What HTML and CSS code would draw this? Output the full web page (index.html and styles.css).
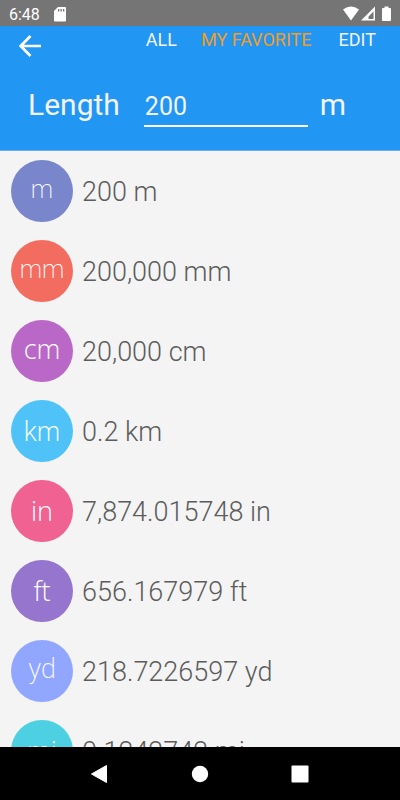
FILE: index.html
```html
<!DOCTYPE html>
<html lang="en">
<head>
  <meta charset="UTF-8">
  <meta name="viewport" content="width=device-width, initial-scale=1">
  <title>Length</title>
  <link rel="stylesheet" href="styles.css">
</head>
<body>

  <div class="status-bar">
    <span>6:48</span>
    <svg class="sd-card" width="12" height="15" viewBox="0 0 12 15">
      <path fill="#fff" d="M4 0h7a1 1 0 0 1 1 1v12.500a1 1 0 0 1-1 1H1a1 1 0 0 1-1-1V4z"/>
      <path fill="#757575" d="M4 2h1.300v2.500H4zM6.500 2h1.300v2.500H6.500zM9 2h1.300v2.500H9z"/>
    </svg>
    <svg class="signals" width="50" height="16" viewBox="0 0 50 16">
      <path fill="#fff" d="M0 3.500Q8 -2.500 16 3.500L8 14.500z"/>
      <path fill="#fff" fill-rule="evenodd" d="M32 0.500V14.500H18zM30.500 5.500L25.500 10.500V13H30.500z"/>
      <path fill="#fff" d="M41.500 0.500h4v1.500h1.500a1 1 0 0 1 1 1v11a1 1 0 0 1-1 1H40a1 1 0 0 1-1-1V3a1 1 0 0 1 1-1h1.500z"/>
    </svg>
  </div>

  <header class="header">
    <div class="toolbar">
      <button class="back-btn" aria-label="Back">
        <svg width="22" height="22" viewBox="0 0 22 22" fill="none" stroke="#fff" stroke-width="2.700">
          <path d="M22 11H2M11.500 1L1.700 11L11.500 21"/>
        </svg>
      </button>
      <nav class="tabs">
        <button>ALL</button>
        <button class="active">MY FAVORITE</button>
        <button>EDIT</button>
      </nav>
    </div>
    <div class="value-row">
      <label for="value">Length</label>
      <input type="text" id="value" inputmode="decimal" value="200">
      <span>m</span>
    </div>
  </header>

  <main class="list-wrap">
    <ul class="unit-list">
      <li><span class="badge small indigo">m</span><span class="amount">200 m</span></li>
      <li><span class="badge small red">mm</span><span class="amount">200,000 mm</span></li>
      <li><span class="badge wide purple">cm</span><span class="amount">20,000 cm</span></li>
      <li><span class="badge wide low sky">km</span><span class="amount">0.2 km</span></li>
      <li><span class="badge wide low pink">in</span><span class="amount">7,874.015748 in</span></li>
      <li><span class="badge wide low violet">ft</span><span class="amount">656.167979 ft</span></li>
      <li><span class="badge blue">yd</span><span class="amount">218.7226597 yd</span></li>
      <li><span class="badge wide low cyan">mi</span><span class="amount">0.1242742 mi</span></li>
    </ul>
  </main>

  <nav class="nav-bar">
    <button aria-label="Back">
      <svg width="20" height="20" viewBox="0 0 20 20"><path fill="#fff" stroke="#fff" stroke-linejoin="round" d="M16.500 1.500V18.500L1.500 10z"/></svg>
    </button>
    <button aria-label="Home">
      <svg width="20" height="20" viewBox="0 0 20 20"><circle cx="10" cy="10" r="8.200" fill="#fff"/></svg>
    </button>
    <button aria-label="Recent apps">
      <svg width="20" height="20" viewBox="0 0 20 20"><rect x="1.500" y="1.500" width="17" height="17" rx="1" fill="#fff"/></svg>
    </button>
  </nav>

</body>
</html>
```
FILE: styles.css
```css
body {
  display: flex;
  flex-direction: column;
  height: 100vh;
  margin: 0;
  background-color: #f4f4f4;
  font-family: Roboto, sans-serif;
}

button {
  padding: 0;
  border: none;
  background: none;
  color: inherit;
  font: inherit;
  cursor: pointer;
}

svg {
  display: block;
}

.status-bar {
  display: flex;
  align-items: center;
  flex-shrink: 0;
  box-sizing: border-box;
  height: 26px;
  padding: 2px 7px 0 9px;
  background-color: #757575;
  color: #fff;
  font-size: 16px;
}

.sd-card {
  margin-left: 14px;
}

.signals {
  margin-left: auto;
}

.header {
  flex-shrink: 0;
  height: 124px;
  background-color: #2196f3;
  border-bottom: 1px solid #6cacf3;
  color: #f4f4f4;
}

.toolbar {
  display: flex;
  justify-content: space-between;
  align-items: flex-start;
  padding: 3px 24px 0 19px;
}

.back-btn {
  padding-top: 6px;
}

.tabs {
  display: flex;
  gap: 24px;
  font-size: 18px;
  line-height: 21px;
}

.tabs button:last-child {
  margin-left: 3px;
}

.tabs .active {
  color: #f39c1f;
}

.value-row {
  display: flex;
  align-items: center;
  padding: 24px 54px 0 28px;
  font-size: 30px;
}

.value-row input {
  flex: 1;
  min-width: 0;
  height: 38px;
  margin: 8px 12px 0 24px;
  padding: 0 1px 2px;
  box-sizing: border-box;
  border: none;
  border-bottom: 2px solid #fff;
  outline: none;
  background: none;
  color: #f4f4f4;
  font: 25px Roboto, sans-serif;
}

.list-wrap {
  flex: 1;
  min-height: 0;
  overflow: hidden;
}

.unit-list {
  margin: 0;
  padding: 0;
  list-style: none;
}

.unit-list li {
  display: flex;
  align-items: center;
  gap: 9px;
  height: 80px;
  padding-left: 11px;
}

.amount {
  padding-top: 2px;
  color: #5c5c5c;
  font-size: 27px;
  font-weight: 350;
}

.badge {
  width: 62px;
  height: 62px;
  border-radius: 50%;
  color: #fff;
  font-size: 27px;
  font-weight: 200;
  line-height: 58px;
  text-align: center;
}

.badge.small {
  font-size: 25px;
  line-height: 60px;
}

.badge.wide {
  font-family: "Open Sans", sans-serif;
}

.badge.low {
  line-height: 62px;
}

.indigo { background-color: #7986cb; }
.red { background-color: #f36c60; }
.purple { background-color: #ba68c8; }
.sky { background-color: #4fc3f7; }
.pink { background-color: #f06292; }
.violet { background-color: #9575cd; }
.blue { background-color: #91a7ff; }
.cyan { background-color: #4dd0e1; }

.nav-bar {
  display: flex;
  justify-content: center;
  align-items: center;
  gap: 80px;
  flex-shrink: 0;
  height: 53px;
  background-color: #000;
}
```
